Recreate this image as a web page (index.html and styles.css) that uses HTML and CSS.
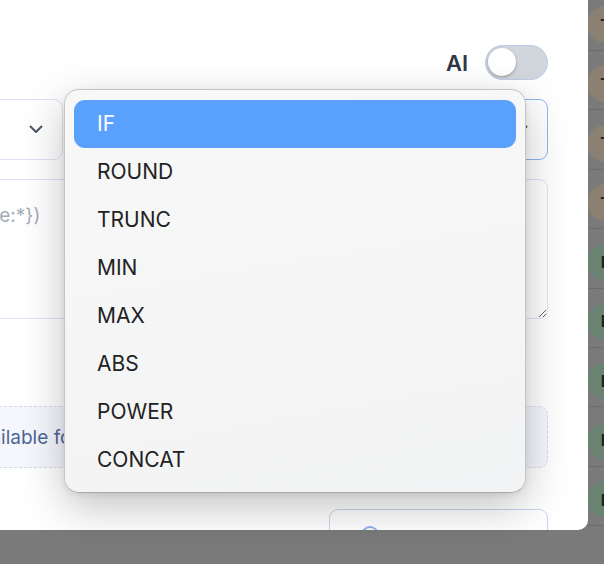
FILE: index.html
```html
<!DOCTYPE html>
<html>
<head>
<meta charset="utf-8">
<link rel="stylesheet" href="styles.css">
</head>
<body>
<div class="page">
  <div class="bg-list">
    <div class="row"><span class="avatar brown">T</span></div>
    <div class="row"><span class="avatar brown">T</span></div>
    <div class="row"><span class="avatar brown">T</span></div>
    <div class="row"><span class="avatar brown">T</span></div>
    <div class="row"><span class="avatar green">E</span></div>
    <div class="row"><span class="avatar green">E</span></div>
    <div class="row"><span class="avatar green">E</span></div>
    <div class="row"><span class="avatar green">E</span></div>
    <div class="row"><span class="avatar green">E</span></div>
  </div>

  <div class="modal">
    <div class="header">
      <span class="ai-label">AI</span>
      <span class="toggle"><span class="knob"></span></span>
    </div>
    <div class="selects">
      <div class="select">
        <span class="select-text">Number</span>
        <svg class="chev" width="14" height="9" viewBox="0 0 14 9"><path d="M1.5 1.5 L7 7 L12.5 1.5" fill="none" stroke="#4b5563" stroke-width="2" stroke-linecap="round" stroke-linejoin="round"/></svg>
      </div>
      <div class="select focused">
        <span class="select-text">IF</span>
        <svg class="chev" width="14" height="9" viewBox="0 0 14 9"><path d="M1.5 1.5 L7 7 L12.5 1.5" fill="none" stroke="#4b5563" stroke-width="2" stroke-linecap="round" stroke-linejoin="round"/></svg>
      </div>
    </div>
    <textarea class="formula" placeholder="e.g. IF({type:*})"></textarea>
    <div class="info">Only available for number fields</div>
    <div class="actions">
      <button class="test-btn"><span class="btn-icon"></span><span class="btn-text">Test formula</span></button>
    </div>
  </div>

  <div class="dropdown">
    <div class="opt active">IF</div>
    <div class="opt">ROUND</div>
    <div class="opt">TRUNC</div>
    <div class="opt">MIN</div>
    <div class="opt">MAX</div>
    <div class="opt">ABS</div>
    <div class="opt">POWER</div>
    <div class="opt">CONCAT</div>
  </div>
</div>
</body>
</html>
```
FILE: styles.css
```css
* { box-sizing: border-box; }
html, body { margin: 0; padding: 0; }
body {
  width: 604px;
  height: 564px;
  overflow: hidden;
  background: #7a7a7a;
  font-family: Inter, "Noto Sans", sans-serif;
}
.page {
  position: relative;
  width: 604px;
  height: 564px;
  overflow: hidden;
  background: #7a7a7a;
}
.bg-list {
  position: absolute;
  left: 0;
  top: -8.4px;
  width: 604px;
  height: 538.4px;
  overflow: hidden;
  background: #7a7a7a;
}
.row {
  height: 59.4px;
  border-bottom: 1px solid #6c6c6c;
  display: flex;
  align-items: flex-end;
  padding-left: 587px;
  padding-bottom: 7px;
}
.avatar {
  width: 37px;
  height: 37px;
  border-radius: 50%;
  flex: none;
  display: flex;
  align-items: center;
  justify-content: center;
  font-size: 16px;
  font-weight: 700;
  color: #252525;
}
.avatar.brown { background: #8a8172; }
.avatar.green { background: #6a8271; color: #14261a; }
.modal {
  position: absolute;
  left: -160px;
  top: -40px;
  width: 748px;
  height: 570px;
  background: #fff;
  border-radius: 10px;
  padding: 85px 40px 0 40px;
  display: flex;
  flex-direction: column;
  overflow: hidden;
}
.modal > * { flex: none; }
.header {
  display: flex;
  justify-content: flex-end;
  align-items: center;
  gap: 17px;
  height: 35px;
}
.ai-label {
  font-size: 22px;
  font-weight: 600;
  color: #2f3747;
  line-height: 1;
}
.toggle {
  position: relative;
  width: 63px;
  height: 35px;
  border-radius: 18px;
  background: #d1d5dc;
  border: 1px solid #bccbea;
}
.knob {
  position: absolute;
  left: 2px;
  top: 2px;
  width: 28px;
  height: 28px;
  border-radius: 50%;
  background: #fff;
  box-shadow: 0 1px 3px rgba(0,0,0,0.3);
}
.selects {
  margin-top: 19px;
  display: grid;
  grid-template-columns: 183px 1fr;
  gap: 16px;
  height: 61px;
}
.select {
  border: 1px solid #dde5f5;
  border-radius: 9px;
  display: flex;
  align-items: center;
  justify-content: space-between;
  padding: 0 19px 0 18px;
  font-size: 18px;
  color: #1f2937;
}
.select.focused { border-color: #8fb5f7; }
.chev { flex: none; }
.formula {
  margin-top: 19px;
  height: 140px;
  border: 1px solid #dde5f6;
  border-radius: 9px;
  padding: 22px 19px;
  font-family: Inter, "Noto Sans", sans-serif;
  font-size: 19px;
  line-height: 28px;
  resize: vertical;
  outline: none;
  display: block;
  width: 100%;
}
.formula::placeholder { color: #a5acb9; }
.info {
  margin-top: 87px;
  height: 62px;
  border: 1px dashed #d2dbee;
  border-radius: 9px;
  background: #f5f7fd;
  display: flex;
  align-items: center;
  padding: 0 16px 0 42px;
  font-size: 19px;
  color: #4d6696;
  white-space: nowrap;
}
.actions {
  margin-top: 41px;
  display: flex;
  justify-content: flex-end;
}
.test-btn {
  width: 219px;
  height: 54px;
  border: 1px solid #c9d4ef;
  border-radius: 9px;
  background: #fff;
  display: flex;
  align-items: flex-start;
  padding: 16px 0 0 31px;
  gap: 10px;
  font-family: Inter, "Noto Sans", sans-serif;
  font-size: 17px;
  color: #3b5b9a;
}
.btn-icon {
  flex: none;
  width: 18px;
  height: 18px;
  border-radius: 50%;
  border: 2px solid #8fb0ee;
}
.btn-text {
  padding-top: 8px;
  line-height: 20px;
}
.dropdown {
  position: absolute;
  left: 64px;
  top: 89px;
  width: 462px;
  height: 404px;
  border-radius: 15px;
  background: linear-gradient(170deg, #f8f8f8, #f2f3f4);
  border: 1px solid #c4c4c4;
  border-bottom-color: #a8a8a8;
  box-shadow: 0 14px 44px rgba(0,0,0,0.24), 0 2px 6px rgba(0,0,0,0.08);
  padding: 10px 9px;
}
.opt {
  height: 48px;
  border-radius: 11px;
  display: flex;
  align-items: center;
  padding: 0 0 2px 23px;
  font-size: 21px;
  color: #222;
}
.opt.active {
  background: #5aa1fe;
  color: #fff;
}
```
